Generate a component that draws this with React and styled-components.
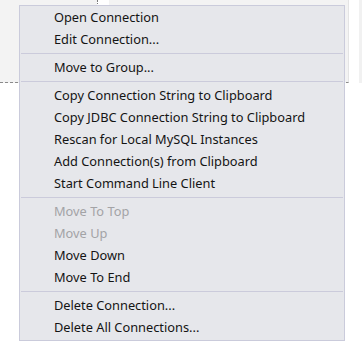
import React from "react";
import styled, { createGlobalStyle } from "styled-components";

const Global = createGlobalStyle`
  html, body { margin: 0; padding: 0; background: #ffffff; }
  body { width: 362px; height: 354px; overflow: hidden; font-family: "Noto Sans", "Open Sans", sans-serif; }
`;

const Page = styled.div`
  position: relative;
  width: 362px;
  height: 354px;
  background: #ffffff;
`;

const TopBand = styled.div`
  display: flex;
  height: 83px;
`;

const Panel = styled.div`
  position: relative;
  width: 349px;
  height: 83px;
  box-sizing: border-box;
  background: #f3f3f3;
  border-right: 1px solid #e4e4e4;
  border-bottom: 1px dashed #8a8a8a;
`;

const PanelTab = styled.div`
  position: absolute;
  left: 97px;
  top: 0;
  width: 11px;
  height: 6px;
  background: #ffffff;
  border-left: 1px dotted #7a7a7a;
`;

const Gap = styled.div`
  width: 10px;
  background: #ffffff;
`;

const Strip = styled.div`
  flex: 1;
  background: #f1f1f1;
`;

const Menu = styled.ul`
  position: absolute;
  left: 19px;
  top: 5px;
  width: 326px;
  margin: 0;
  padding: 0 0 2px;
  box-sizing: border-box;
  list-style: none;
  background: #e6e7eb;
  border: 1px solid #cacbdb;
`;

const Item = styled.li`
  height: 22px;
  display: flex;
  align-items: center;
  padding-left: 34px;
  font-size: 12.8px;
  color: ${(p) => (p.$disabled ? "#a3a3a6" : "#141414")};
  white-space: nowrap;
`;

const Separator = styled.li`
  height: 6px;
  display: flex;
  align-items: center;
  padding: 0 1px;
  &::after {
    content: "";
    flex: 1;
    height: 1px;
    background: #cbcbdb;
  }
`;

const entries = [
  { t: "Open Connection" },
  { t: "Edit Connection..." },
  { sep: true },
  { t: "Move to Group..." },
  { sep: true },
  { t: "Copy Connection String to Clipboard" },
  { t: "Copy JDBC Connection String to Clipboard" },
  { t: "Rescan for Local MySQL Instances" },
  { t: "Add Connection(s) from Clipboard" },
  { t: "Start Command Line Client" },
  { sep: true },
  { t: "Move To Top", d: true },
  { t: "Move Up", d: true },
  { t: "Move Down" },
  { t: "Move To End" },
  { sep: true },
  { t: "Delete Connection..." },
  { t: "Delete All Connections..." },
];

export default function App() {
  return (
    <Page>
      <Global />
      <TopBand>
        <Panel>
          <PanelTab />
        </Panel>
        <Gap />
        <Strip />
      </TopBand>
      <Menu>
        {entries.map((e, i) =>
          e.sep ? (
            <Separator key={i} />
          ) : (
            <Item key={i} $disabled={e.d}>
              {e.t}
            </Item>
          )
        )}
      </Menu>
    </Page>
  );
}
